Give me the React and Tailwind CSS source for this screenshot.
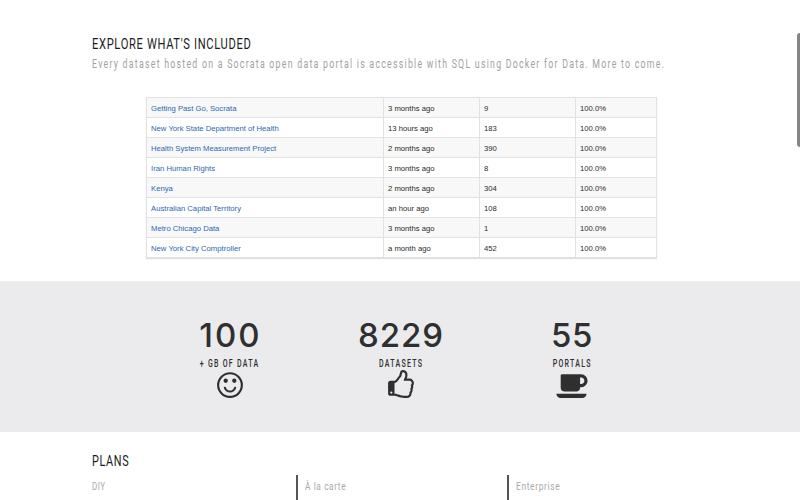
const rows = [
  ['Getting Past Go, Socrata', '3 months ago', '9'],
  ['New York State Department of Health', '13 hours ago', '183'],
  ['Health System Measurement Project', '2 months ago', '390'],
  ['Iran Human Rights', '3 months ago', '8'],
  ['Kenya', '2 months ago', '304'],
  ['Australian Capital Territory', 'an hour ago', '108'],
  ['Metro Chicago Data', '3 months ago', '1'],
  ['New York City Comptroller', 'a month ago', '452'],
];

const smile =
  'M1134 461q-37 -121 -138 -195t-228 -74t-228 74t-138 195q-8 25 4 48.5t38 31.5q25 8 48.5 -4t31.5 -38q25 -80 92.5 -129.5t151.5 -49.5t151.5 49.5t92.5 129.5q8 26 32 38t49 4t37 -31.5t4 -48.5z';
const thumb =
  'M256 192q0 26 -19 45t-45 19t-45 -19t-19 -45t19 -45t45 -19t45 19t19 45zM1408 768q0 51 -39 89.5t-89 38.5h-352q0 58 48 159.5t48 160.5q0 98 -32 145t-128 47q-26 -26 -38 -85t-30.5 -125.5t-59.5 -109.5q-22 -23 -77 -91q-4 -5 -23 -30t-31.5 -41t-34.5 -42.5t-40 -44t-38.5 -35.5t-40 -27t-35.5 -9h-32v-640h32q13 0 31.5 -3t33 -6.5t38 -11t35 -11.5t35.5 -12.5t29 -10.5q211 -73 342 -73h121q192 0 192 167q0 26 -5 56q30 16 47.5 52.5t17.5 73.5t-18 69q53 50 53 119q0 25 -10 55.5t-25 47.5q32 1 53.5 47t21.5 81zM1536 769q0 -89 -49 -163q9 -33 9 -69q0 -77 -38 -144q3 -21 3 -43q0 -101 -60 -178q1 -139 -85 -219.5t-227 -80.5h-36h-93q-96 0 -189.5 22.5t-216.5 65.5q-116 40 -138 40h-288q-53 0 -90.5 37.5t-37.5 90.5v640q0 53 37.5 90.5t90.5 37.5h274q36 24 137 155q58 75 107 128q24 25 35.5 85.5t30.5 126.5t62 108q39 37 90 37q84 0 151 -32.5t102 -101.5t35 -186q0 -93 -48 -192h176q104 0 180 -76t76 -179z';
const cup =
  'M1664 896q0 80 -56 136t-136 56h-64v-384h64q80 0 136 56t56 136zM0 128h1792q0 -106 -75 -181t-181 -75h-1280q-106 0 -181 75t-75 181zM1856 896q0 -159 -112.5 -271.5t-271.5 -112.5h-64v-32q0 -92 -66 -158t-158 -66h-704q-92 0 -158 66t-66 158v736q0 26 19 45t45 19h1152q159 0 271.5 -112.5t112.5 -271.5z';

function Icon({ width, className, children }) {
  return (
    <svg viewBox={`0 0 ${width} 1664`} className={`h-7 fill-[#2f2f2f] ${className}`}>
      <g transform="translate(0 1536) scale(1 -1)">{children}</g>
    </svg>
  );
}

function Stat({ value, label, className, valueClass, children }) {
  return (
    <div className={`flex flex-col items-center text-[#2f2f2f] ${className}`}>
      <div
        className={`h-8 whitespace-nowrap font-['Inter',sans-serif] text-[33px] leading-8 font-medium ${valueClass}`}
      >
        {value}
      </div>
      <div className="mt-[7px] h-3 scale-x-[0.67] whitespace-nowrap text-[10.5px] leading-3 font-medium tracking-[1.9px]">
        {label}
      </div>
      {children}
    </div>
  );
}

export default function App() {
  return (
    <div className="flex h-[500px] w-[800px] overflow-hidden bg-white font-['Roboto',sans-serif]">
      <div className="w-[797px] shrink-0">
        <section className="flex h-[281px] flex-col pl-[92px] pt-[33px]">
          <h2 className="h-5 w-max origin-left scale-x-[0.72] whitespace-nowrap text-[15.5px] leading-[22px] tracking-[0.9px] text-[#1c1c1c]">
            EXPLORE WHAT'S INCLUDED
          </h2>
          <p className="mt-[2px] h-4 w-max origin-left scale-x-[0.732] whitespace-nowrap text-[12px] leading-[18px] tracking-[1.7px] text-[#a2a2a2]">
            Every dataset hosted on a Socrata open data portal is accessible with SQL using Docker for Data. More to
            come.
          </p>
          <div className="ml-[54px] mt-[26px] w-[511px] border-t border-l border-[#e2e2e2] font-['Liberation_Sans',sans-serif] text-[7.7px] text-[#2a2a2a] shadow-[0_1px_1px_rgba(0,0,0,0.12)]">
            {rows.map(([name, when, count]) => (
              <div
                key={name}
                className="grid h-5 grid-cols-[237px_96px_96px_81px] border-b border-[#e2e2e2] leading-[21px] odd:bg-[#f8f8f8] *:h-full *:border-r *:border-[#e2e2e2] *:pl-1"
              >
                <span className="text-[#2b68b0]">{name}</span>
                <span>{when}</span>
                <span>{count}</span>
                <span>100.0%</span>
              </div>
            ))}
          </div>
        </section>

        <section className="flex h-[151px] w-[800px] bg-[#ebebed] pl-[150px] pt-[38px]">
          <Stat value="100" label="+ GB OF DATA" className="w-40" valueClass="pl-px tracking-[2px]">
            <Icon width={1536} className="w-[26px]">
              <path d={smile} />
              <circle cx="512" cy="896" r="128" />
              <circle cx="1024" cy="896" r="128" />
              <circle cx="768" cy="640" r="704" fill="none" stroke="#2f2f2f" strokeWidth="128" />
            </Icon>
          </Stat>
          <Stat value="8229" label="DATASETS" className="ml-[11px] w-40" valueClass="tracking-[1px]">
            <Icon width={1536} className="w-[26px]">
              <path d={thumb} />
            </Icon>
          </Stat>
          <Stat value="55" label="PORTALS" className="ml-[11px] w-40" valueClass="tracking-[0.5px]">
            <Icon width={1856} className="w-[32px]">
              <path d={cup} />
            </Icon>
          </Stat>
        </section>

        <section className="pl-[92px] pt-[19px]">
          <h2 className="h-5 w-max origin-left scale-x-[0.7] text-[15.5px] leading-5 tracking-[0.9px] text-[#1c1c1c]">
            PLANS
          </h2>
          <div className="mt-1 flex h-[30px] text-[11.5px] leading-[23px] text-[#a9a9a9]">
            <div className="w-[204px]">
              <span className="inline-block origin-left scale-x-[0.69] tracking-[0.7px]">DIY</span>
            </div>
            <div className="w-[211px] border-l-2 border-[#555] pl-[7px]">
              <span className="inline-block origin-left scale-x-[0.715] tracking-[0.9px]">À la carte</span>
            </div>
            <div className="border-l-2 border-[#555] pl-[7px]">
              <span className="inline-block origin-left scale-x-[0.73] tracking-[0.9px]">Enterprise</span>
            </div>
          </div>
        </section>
      </div>
      <div className="mt-[33px] h-[114px] w-[3px] shrink-0 rounded-l-sm bg-[#858585]" />
    </div>
  );
}
